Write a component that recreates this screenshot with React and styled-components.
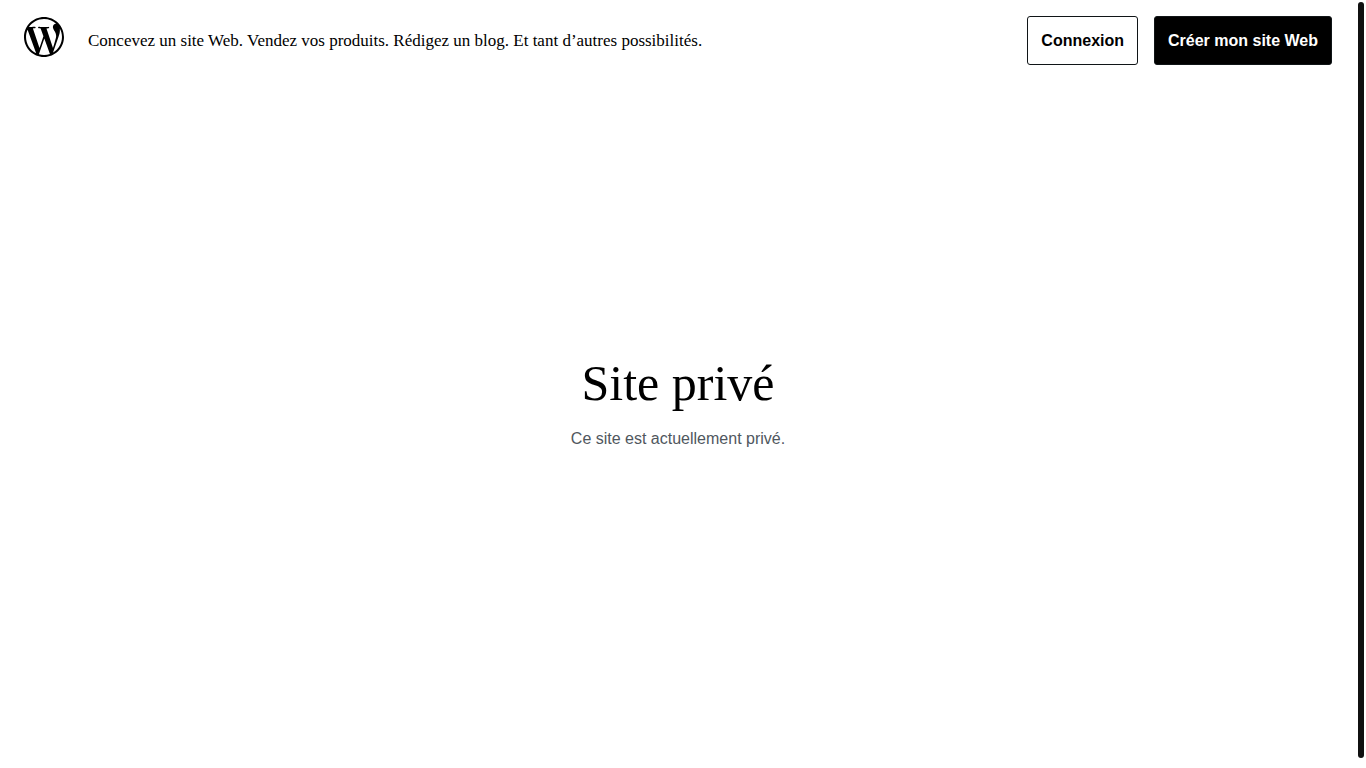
import React from "react";
import styled, { createGlobalStyle } from "styled-components";
import { SiWordpress } from "react-icons/si";

const GlobalStyle = createGlobalStyle`
  * { box-sizing: border-box; }
  body {
    margin: 0;
    background: #fff;
    color: #000;
    font-family: "Liberation Sans", Arial, sans-serif;
    font-size: 16px;
  }
`;

const Page = styled.div`
  display: flex;
  min-height: 100vh;
`;

const Content = styled.div`
  flex: 1;
  display: flex;
  flex-direction: column;
`;

const Header = styled.header`
  display: flex;
  align-items: center;
  padding: 16px 24px;
`;

const LogoLink = styled.a`
  display: flex;
  margin: 0 24px 8px 0;
  color: #000;
`;

const Tagline = styled.p`
  flex: 1;
  margin: 0;
  font-family: "Liberation Serif", serif;
  font-size: 17px;
  line-height: 24px;
`;

const Actions = styled.nav`
  display: flex;
  gap: 16px;
`;

const ActionLink = styled.a`
  padding: 12px 13px;
  border: 1px solid #101517;
  border-radius: 3px;
  background: ${(p) => (p.$primary ? "#000" : "#fff")};
  color: ${(p) => (p.$primary ? "#fff" : "#000")};
  font-weight: 700;
  line-height: 23px;
  text-decoration: none;
  white-space: nowrap;
`;

const Main = styled.main`
  flex: 1;
  display: flex;
  flex-direction: column;
  align-items: center;
  justify-content: center;
  padding-bottom: 44px;
  text-align: center;
`;

const Title = styled.h1`
  margin: 0 0 16px;
  font-family: "Liberation Serif", serif;
  font-size: 50px;
  font-weight: 400;
  line-height: 56px;
`;

const Message = styled.p`
  margin: 0;
  color: #50575e;
  line-height: 24px;
`;

const ScrollTrack = styled.div`
  display: flex;
  width: 10px;
  padding: 2px 2px 10px;
`;

const ScrollThumb = styled.div`
  flex: 1;
  border-radius: 3px;
  background: #101010;
`;

export default function App() {
  return (
    <Page>
      <GlobalStyle />
      <Content>
        <Header>
          <LogoLink href="#" aria-label="WordPress.com">
            <SiWordpress size={40} />
          </LogoLink>
          <Tagline>
            Concevez un site Web. Vendez vos produits. Rédigez un blog. Et tant d’autres possibilités.
          </Tagline>
          <Actions>
            <ActionLink href="#">Connexion</ActionLink>
            <ActionLink href="#" $primary>Créer mon site Web</ActionLink>
          </Actions>
        </Header>
        <Main>
          <Title>Site privé</Title>
          <Message>Ce site est actuellement privé.</Message>
        </Main>
      </Content>
      <ScrollTrack aria-hidden="true">
        <ScrollThumb />
      </ScrollTrack>
    </Page>
  );
}
